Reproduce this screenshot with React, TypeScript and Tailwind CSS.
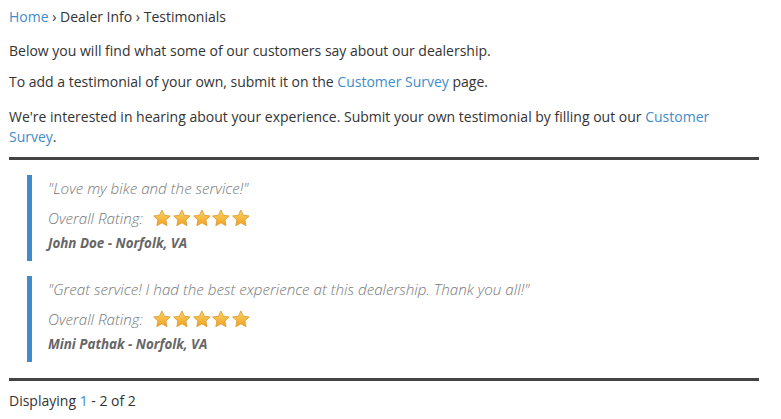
import React from 'react';

type Testimonial = { quote: string; author: string; rating: number };

const testimonials: Testimonial[] = [
  { quote: '"Love my bike and the service!"', author: 'John Doe - Norfolk, VA', rating: 5 },
  {
    quote: '"Great service! I had the best experience at this dealership. Thank you all!"',
    author: 'Mini Pathak - Norfolk, VA',
    rating: 5,
  },
];

const Star: React.FC<{ id: string }> = ({ id }) => (
  <svg width="19.8" height="18" viewBox="0 0 24 23" className="block">
    <defs>
      <linearGradient id={id} x1="0" y1="0" x2="0" y2="1">
        <stop offset="0%" stopColor="#fbd46a" />
        <stop offset="100%" stopColor="#f0a21e" />
      </linearGradient>
    </defs>
    <path
      d="M12 1.2l3.2 6.8 7.4.9-5.5 5.1 1.4 7.3L12 17.7l-6.5 3.6 1.4-7.3L1.4 8.9l7.4-.9z"
      fill={`url(#${id})`}
      stroke="#d9962a"
      strokeWidth="1"
      strokeLinejoin="round"
    />
  </svg>
);

const App: React.FC = () => {
  return (
    <div className="w-[781px] h-[419px] bg-white text-[14px] leading-[20px] text-[#333] font-['Open_Sans',sans-serif]">
      <div className="w-[750px] ml-[9px] pt-[7px]">
        <div>
          <a className="text-[#428bca]">Home</a> › Dealer Info › Testimonials
        </div>
        <p className="mt-[14px]">Below you will find what some of our customers say about our dealership.</p>
        <p className="mt-[11px]">
          To add a testimonial of your own, submit it on the <a className="text-[#428bca]">Customer Survey</a> page.
        </p>
        <p className="mt-[15px]">
          We're interested in hearing about your experience. Submit your own testimonial by filling out our{' '}
          <a className="text-[#428bca]">Customer Survey</a>.
        </p>
        <div className="mt-[10px] h-[3px] bg-[#444]" />
        <div className="pt-[15px] flex flex-col gap-[15px]">
          {testimonials.map((t, i) => (
            <blockquote
              key={i}
              className="ml-[18px] border-l-[5px] border-[#428bca] pl-[16px] pt-[3px] pb-[8px] italic text-[#777]"
            >
              <div className="text-[15.2px] font-light">{t.quote}</div>
              <div className="mt-[10px] flex items-center h-[20px]">
                <span className="text-[15.2px] font-light">Overall Rating:</span>
                <span className="ml-[9px] flex">
                  {Array.from({ length: t.rating }).map((_, j) => (
                    <Star key={j} id={`star-${i}-${j}`} />
                  ))}
                </span>
              </div>
              <div className="mt-[5px] font-bold text-[13.4px] text-[#666]">{t.author}</div>
            </blockquote>
          ))}
        </div>
        <div className="mt-[16px] h-[3px] bg-[#444]" />
        <div className="mt-[10px]">
          Displaying <span className="text-[#428bca]">1</span> - 2 of 2
        </div>
      </div>
    </div>
  );
};

export default App;
